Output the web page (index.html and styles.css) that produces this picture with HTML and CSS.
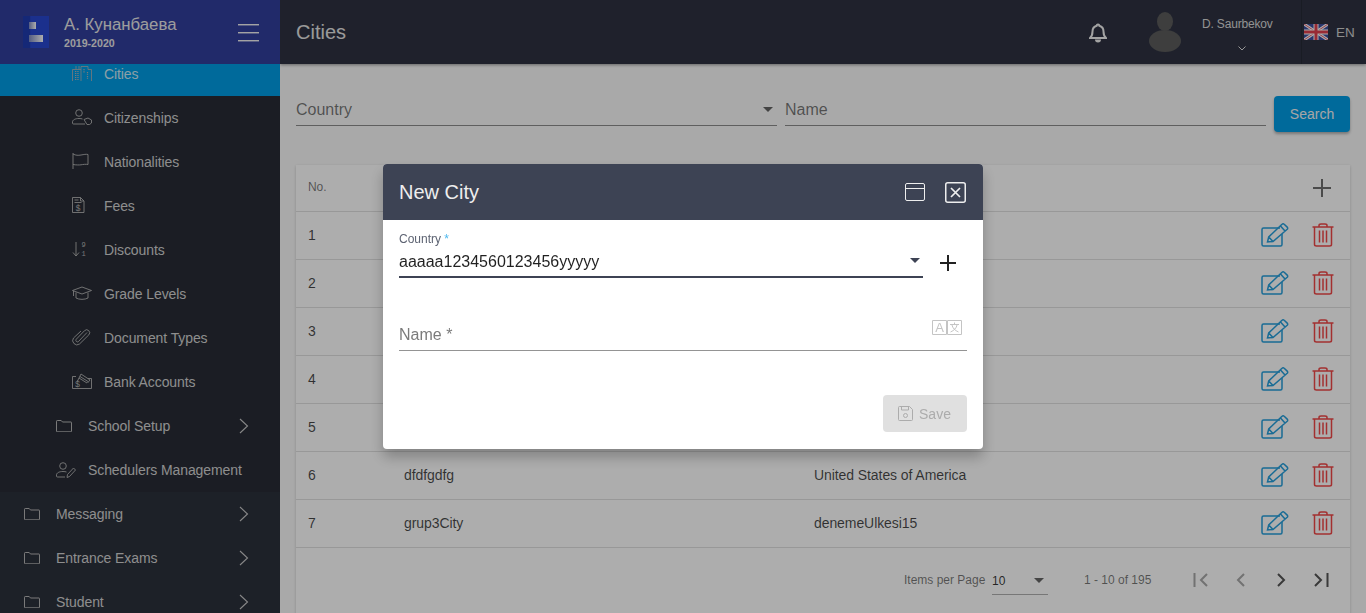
FILE: index.html
```html
<!DOCTYPE html>
<html lang="en">
<head>
<meta charset="utf-8">
<title>Cities</title>
<link rel="stylesheet" href="styles.css">
</head>
<body>
<svg class="defs" width="0" height="0" aria-hidden="true">
  <defs>
    <symbol id="i-folder" viewBox="0 0 16 12"><path d="M.5 2V1.200C.5.800.800.500 1.200.500h4L6.500 2H15c.3 0 .5.200.5.500v8.800c0 .3-.2.500-.5.500H1c-.3 0-.5-.2-.5-.5V2z" fill="none" stroke="currentColor"/></symbol>
    <symbol id="i-chev" viewBox="0 0 10 16"><path d="M1 1l7.500 7L1 15" fill="none" stroke="currentColor" stroke-width="1.100"/></symbol>
    <symbol id="i-edit" viewBox="0 0 28 24"><path d="M19 5H2.500A1.500 1.500 0 0 0 1 6.500v15A1.500 1.500 0 0 0 2.500 23h17a1.500 1.500 0 0 0 1.500-1.500V11" fill="none" stroke="currentColor" stroke-width="1.500"/><path d="M6.500 19l1.200-5L21 1.300a1.500 1.500 0 0 1 2.200 0l3 2.800a1.500 1.500 0 0 1 0 2.200L12 18.500z M7.700 14l4.300 4.500 M19.500 3l4.500 5" fill="none" stroke="currentColor" stroke-width="1.500"/></symbol>
    <symbol id="i-trash" viewBox="0 0 22 24"><path d="M.5 4h21M7 4V2.500C7 1.500 8 1 9 1h4c1 0 2 .5 2 1.500V4M2.500 4v17.500C2.500 22.500 3.500 23 4.500 23h13c1 0 2-.5 2-1.500V4M7.500 7.500v12M11 7.500v12M14.500 7.500v12" fill="none" stroke="currentColor" stroke-width="1.500"/></symbol>
  </defs>
</svg>

<div class="app">
  <aside class="sidebar">
    <div class="brand">
      <div class="logo"><span class="logo-a"></span><span class="logo-b"></span></div>
      <div class="brand-text">
        <div class="brand-name">А. Кунанбаева</div>
        <div class="brand-year">2019-2020</div>
      </div>
      <div class="burger"><span></span><span></span><span></span></div>
    </div>
    <nav class="nav">
      <div class="nested">
        <a class="item lvl3 active">
          <svg class="ico" viewBox="0 0 20 16"><path d="M.5 16V4.500H9M4 4.500V1M7 4.500V1M9 16V1.500h7v3h3.500V16" fill="none" stroke="currentColor" stroke-width=".8"/><path d="M3 6.500h4M3 8.500h4M3 10.500h4M3 12.500h4M3 14.500h4M12 4v4M15.500 7v3M15.500 11v3" stroke="currentColor" stroke-width="1.200" stroke-dasharray="1 .7" fill="none"/></svg>
          <span>Cities</span>
        </a>
        <a class="item lvl3">
          <svg class="ico" viewBox="0 0 20 16"><circle cx="7" cy="4" r="3.300" fill="none" stroke="currentColor" stroke-width=".9"/><path d="M13 15H1.500A1 1 0 0 1 .5 14v-1c0-2 2.500-3.500 6.500-3.500 1.500 0 2.500.2 3.500.5" fill="none" stroke="currentColor" stroke-width=".9"/><path d="M12 10.500l4-1.500 3.500 2v3l-2 1.500H15z" fill="none" stroke="currentColor" stroke-width=".9"/></svg>
          <span>Citizenships</span>
        </a>
        <a class="item lvl3">
          <svg class="ico" viewBox="0 0 20 16"><path d="M1 0v16M1 1c3 1.500 5 1.500 8 1s5-1 7-.5v10c-2-.5-5 0-7 .3s-5 .2-8-.3" fill="none" stroke="currentColor" stroke-width=".9"/></svg>
          <span>Nationalities</span>
        </a>
        <a class="item lvl3">
          <svg class="ico" viewBox="0 0 20 16"><path d="M.5.500h8l3.500 3.500v11.500H.5zM8.500.500V4H12M2.500 3h4M2.500 5.500h7" fill="none" stroke="currentColor" stroke-width=".9"/><text x="3.500" y="14" class="ico-text">$</text></svg>
          <span>Fees</span>
        </a>
        <a class="item lvl3">
          <svg class="ico" viewBox="0 0 20 16"><path d="M4 1v14M1 11.500L4 15l3-3.500" fill="none" stroke="currentColor" stroke-width=".9"/><text x="9.500" y="6" class="ico-digit">9</text><text x="9.500" y="14.500" class="ico-digit">1</text></svg>
          <span>Discounts</span>
        </a>
        <a class="item lvl3">
          <svg class="ico" viewBox="0 0 20 16"><path d="M.5 5.500L10 2l9.500 3.500L10 9zM4 7.500V13c3 1.800 9 1.800 12 0V7.500M1.500 6v5" fill="none" stroke="currentColor" stroke-width=".9"/></svg>
          <span>Grade Levels</span>
        </a>
        <a class="item lvl3">
          <svg class="ico" viewBox="0 0 20 16"><path d="M15 3.500L6.500 12.500a1.600 1.600 0 0 1-2.300-2.200L12.500 1.700a3 3 0 0 1 4.300 4.200L7.500 15a4.300 4.300 0 0 1-6-6L9 2" fill="none" stroke="currentColor" stroke-width=".9"/></svg>
          <span>Document Types</span>
        </a>
        <a class="item lvl3">
          <svg class="ico" viewBox="0 0 20 16"><path d="M4 3.500H.5v12h19v-10H16M5 9l4-8 9 6-2.500 3M7 5l8 5M8 3.500l8 5" fill="none" stroke="currentColor" stroke-width=".9"/><text x="3" y="14" class="ico-text">$</text></svg>
          <span>Bank Accounts</span>
        </a>
        <a class="item lvl2">
          <svg class="ico folder"><use href="#i-folder"/></svg>
          <span class="grow">School Setup</span>
          <svg class="chev"><use href="#i-chev"/></svg>
        </a>
        <a class="item lvl2">
          <svg class="ico" viewBox="0 0 20 16"><circle cx="7" cy="4" r="3.300" fill="none" stroke="currentColor" stroke-width=".9"/><path d="M9 15H1.500A1 1 0 0 1 .5 14v-1c0-2 2.500-3.500 6.500-3.500 1.500 0 2.500.2 3.500.5M11 15.500l.5-3 6-6.500 2 2-6 6.500z" fill="none" stroke="currentColor" stroke-width=".9"/></svg>
          <span>Schedulers Management</span>
        </a>
      </div>
      <a class="item lvl1"><svg class="ico folder"><use href="#i-folder"/></svg><span class="grow">Messaging</span><svg class="chev"><use href="#i-chev"/></svg></a>
      <a class="item lvl1"><svg class="ico folder"><use href="#i-folder"/></svg><span class="grow">Entrance Exams</span><svg class="chev"><use href="#i-chev"/></svg></a>
      <a class="item lvl1"><svg class="ico folder"><use href="#i-folder"/></svg><span class="grow">Student</span><svg class="chev"><use href="#i-chev"/></svg></a>
    </nav>
  </aside>

  <div class="main">
    <header class="topbar">
      <h1 class="page-title">Cities</h1>
      <svg class="bell" viewBox="0 0 18 20"><path d="M9 1.500a1.300 1.300 0 0 1 1.300 1.200C13 3.400 14.500 5.500 14.500 8.500c0 3.500.8 5 2.500 6.500H1c1.700-1.500 2.500-3 2.500-6.500 0-3 1.500-5.100 4.200-5.800A1.300 1.300 0 0 1 9 1.500z" fill="none" stroke="currentColor" stroke-width="2"/><path d="M6 16.500a3 3 0 0 0 6 0z" fill="currentColor"/></svg>
      <svg class="avatar" viewBox="0 0 32 40"><ellipse cx="16" cy="9.500" rx="8" ry="9.500" fill="currentColor"/><ellipse cx="16" cy="29" rx="16" ry="11" fill="currentColor"/></svg>
      <div class="user">
        <div class="user-name">D. Saurbekov</div>
        <svg class="user-chev" viewBox="0 0 8 5"><path d="M.5.500L4 4 7.500.500" fill="none" stroke="currentColor"/></svg>
      </div>
      <div class="lang">
        <svg class="flag" viewBox="0 0 24 16"><rect width="24" height="16" fill="#3c4ea0"/><path d="M0 0l24 16M24 0L0 16" stroke="#fff" stroke-width="3"/><path d="M0 0l24 16M24 0L0 16" stroke="#e05a6a" stroke-width="1"/><path d="M12 0v16M0 8h24" stroke="#fff" stroke-width="5"/><path d="M12 0v16M0 8h24" stroke="#e0404f" stroke-width="3"/></svg>
        <span>EN</span>
      </div>
    </header>

    <section class="content">
      <div class="filters">
        <div class="field select-field"><span class="ph">Country</span><i class="caret"></i></div>
        <div class="field"><span class="ph">Name</span></div>
        <button class="search" type="button">Search</button>
      </div>

      <div class="card">
        <div class="row head"><span class="c-no">No.</span><span class="grow"></span><svg class="plus" viewBox="0 0 20 20"><path d="M10 1v18M1 10h18" stroke="currentColor" stroke-width="2"/></svg></div>
        <div class="row"><span class="c-no">1</span><span class="c-name"></span><span class="c-country"></span><svg class="act edit"><use href="#i-edit"/></svg><svg class="act trash"><use href="#i-trash"/></svg></div>
        <div class="row"><span class="c-no">2</span><span class="c-name"></span><span class="c-country"></span><svg class="act edit"><use href="#i-edit"/></svg><svg class="act trash"><use href="#i-trash"/></svg></div>
        <div class="row"><span class="c-no">3</span><span class="c-name"></span><span class="c-country"></span><svg class="act edit"><use href="#i-edit"/></svg><svg class="act trash"><use href="#i-trash"/></svg></div>
        <div class="row"><span class="c-no">4</span><span class="c-name"></span><span class="c-country"></span><svg class="act edit"><use href="#i-edit"/></svg><svg class="act trash"><use href="#i-trash"/></svg></div>
        <div class="row"><span class="c-no">5</span><span class="c-name"></span><span class="c-country"></span><svg class="act edit"><use href="#i-edit"/></svg><svg class="act trash"><use href="#i-trash"/></svg></div>
        <div class="row"><span class="c-no">6</span><span class="c-name">dfdfgdfg</span><span class="c-country">United States of America</span><svg class="act edit"><use href="#i-edit"/></svg><svg class="act trash"><use href="#i-trash"/></svg></div>
        <div class="row"><span class="c-no">7</span><span class="c-name">grup3City</span><span class="c-country">denemeUlkesi15</span><svg class="act edit"><use href="#i-edit"/></svg><svg class="act trash"><use href="#i-trash"/></svg></div>
        <div class="pager">
          <span class="pg-label">Items per Page</span>
          <div class="pg-select"><span>10</span><i class="caret"></i></div>
          <span class="pg-range">1 - 10 of 195</span>
          <svg class="pg-btn off" viewBox="0 0 16 14"><path d="M1.500 0v14M14 1L8 7l6 6" fill="none" stroke="currentColor" stroke-width="2"/></svg>
          <svg class="pg-btn off" viewBox="0 0 16 14"><path d="M11 1L5 7l6 6" fill="none" stroke="currentColor" stroke-width="2"/></svg>
          <svg class="pg-btn" viewBox="0 0 16 14"><path d="M5 1l6 6-6 6" fill="none" stroke="currentColor" stroke-width="2"/></svg>
          <svg class="pg-btn" viewBox="0 0 16 14"><path d="M14.500 0v14M2 1l6 6-6 6" fill="none" stroke="currentColor" stroke-width="2"/></svg>
        </div>
      </div>
    </section>
  </div>
</div>

<div class="backdrop"></div>

<div class="dialog">
  <div class="dlg-head">
    <h2 class="dlg-title">New City</h2>
    <svg class="dlg-ico" viewBox="0 0 20 18"><rect x=".5" y=".5" width="19" height="17" rx="1.500" fill="none" stroke="currentColor"/><path d="M.5 5.500h19" stroke="currentColor"/></svg>
    <svg class="dlg-ico close" viewBox="0 0 21 21"><rect x=".75" y=".75" width="19.500" height="19.500" rx="2" fill="none" stroke="currentColor" stroke-width="1.500"/><path d="M6 6l9 9M15 6l-9 9" stroke="currentColor" stroke-width="1.700"/></svg>
  </div>
  <div class="dlg-body">
    <div class="dlg-row">
      <div class="dlg-select">
        <label class="dlg-label">Country <b>*</b></label>
        <div class="dlg-value"><span>aaaaa1234560123456yyyyy</span><i class="caret"></i></div>
      </div>
      <svg class="dlg-plus" viewBox="0 0 16 16"><path d="M8 0v16M0 8h16" stroke="currentColor" stroke-width="2"/></svg>
    </div>
    <div class="dlg-name">
      <span class="ph">Name *</span>
      <svg class="translate" viewBox="0 0 30 15"><path d="M.5.500h14v14H.5zM15.500.500h14v14h-14z" fill="none" stroke="currentColor"/><text x="7.500" y="12" class="tr-a">A</text><path d="M22.500 2.500v1.500M18 4.500h9M20 5c.5 3 3 5.500 6.500 7M25 5c-.5 3-3 5.500-6.500 7" fill="none" stroke="currentColor"/></svg>
    </div>
    <div class="dlg-actions">
      <button class="save" type="button">
        <svg class="save-ico" viewBox="0 0 15 15"><path d="M1.500.500h10l3 3v10a1 1 0 0 1-1 1h-12a1 1 0 0 1-1-1v-12a1 1 0 0 1 1-1zM3.500.500v3.500h7V.500" fill="none" stroke="currentColor"/><circle cx="7.500" cy="9.500" r="2" fill="none" stroke="currentColor"/></svg>
        <span>Save</span>
      </button>
    </div>
  </div>
</div>
</body>
</html>
```

FILE: styles.css
```css
* { box-sizing: border-box; }
html, body { height: 100%; }
body {
  margin: 0;
  overflow: hidden;
  font-family: "Liberation Sans", Arial, sans-serif;
  background: #fafafa;
  color: rgba(0, 0, 0, .87);
}
.defs { position: absolute; }
.grow { flex: 1; }

.app { display: flex; height: 613px; overflow: hidden; }

/* Sidebar */
.sidebar { width: 280px; flex: none; display: flex; flex-direction: column; background: #2c313c; position: relative; z-index: 2; overflow: hidden; }
.brand { height: 64px; flex: none; display: flex; align-items: center; padding-left: 23px; background: #323e9d; color: #f0f0f0; position: relative; z-index: 1; }
.logo { width: 26px; height: 32px; background: linear-gradient(90deg, #1f3bb0 0, #1f3bb0 25%, #2848d0 30%, #2848d0 100%); position: relative; flex: none; }
.logo-a { position: absolute; left: 6px; top: 6px; width: 7px; height: 7px; background: linear-gradient(90deg, #7d8ac0, #fff); }
.logo-b { position: absolute; left: 6px; top: 19px; width: 14px; height: 7px; background: linear-gradient(90deg, #7d8ac0, #fff); }
.brand-text { margin-left: 15px; flex: 1; padding-top: 1px; }
.brand-name { font-size: 16.8px; line-height: 18px; color: #e8e8e8; }
.brand-year { font-size: 10.6px; font-weight: 700; line-height: 12px; margin-top: 3px; color: #e8e8e8; }
.burger { width: 21px; margin-right: 21px; display: flex; flex-direction: column; gap: 7px; }
.burger span { height: 1px; background: #f0f0f0; box-shadow: 0 1px 0 rgba(255,255,255,.4); }

.nav { flex: 1; margin-top: -12px; }
.nested { background: #282c36; }
.item { display: flex; align-items: center; height: 44px; font-size: 14px; letter-spacing: -.09px; color: #d2d2d2; padding-right: 31px; }
.lvl1 { padding-left: 24px; }
.lvl2 { padding-left: 56px; }
.lvl3 { padding-left: 72px; }
.active { background: #009de5; color: #cfeaf5; }
.ico { width: 20px; height: 16px; flex: none; margin-right: 12px; color: #b4b4b4; overflow: visible; }
.lvl3 .ico { margin-top: -2px; }
.folder { width: 16px; height: 12px; margin-right: 16px; }
.ico-text { font-size: 8.5px; fill: currentColor; font-family: "Liberation Mono", monospace; letter-spacing: 0; }
.ico-digit { font-size: 7px; fill: currentColor; font-family: "Liberation Mono", monospace; letter-spacing: 0; }
.chev { width: 10px; height: 16px; color: #c8c8c8; flex: none; }

/* Main */
.main { flex: 1; min-width: 0; display: flex; flex-direction: column; }
.topbar { height: 64px; flex: none; display: flex; align-items: center; padding-left: 16px; background: #2e3241; color: #d8d8d8; box-shadow: 0 1px 3px rgba(0,0,0,.4); position: relative; z-index: 1; }
.page-title { flex: 1; margin: 0; font-size: 20px; font-weight: 400; color: #e4e4e4; }
.bell { width: 18px; height: 20px; color: #f0f0f0; margin: 2px 42px 0 0; }
.avatar { width: 32px; height: 40px; color: #5c5c5c; margin-right: 21px; }
.user { width: 99px; height: 64px; display: flex; flex-direction: column; align-items: flex-start; padding-top: 17px; flex: none; }
.user-name { font-size: 12px; line-height: 14px; letter-spacing: -.17px; color: #d8d8d8; white-space: nowrap; }
.user-chev { width: 8px; height: 5px; margin: 15px 0 0 36px; color: #e0e0e0; }
.lang { width: 65px; height: 64px; flex: none; display: flex; align-items: center; padding-left: 2px; border-left: 1px solid #262a36; gap: 8px; font-size: 13.5px; color: #d0d0d0; }
.flag { width: 24px; height: 16px; }

.content { flex: 1; padding: 32px 16px 0; background: #fafafa; }
.filters { display: flex; gap: 8px; align-items: flex-start; }
.field { flex: 1 1 0; min-width: 0; height: 30px; border-bottom: 1px solid #8d8d8d; display: flex; align-items: center; padding-bottom: 2px; }
.ph { font-size: 16px; color: rgba(0, 0, 0, .54); }
.select-field { justify-content: space-between; }
.select-field .caret { margin-right: 4px; }
.caret { display: block; width: 0; height: 0; border-left: 5px solid transparent; border-right: 5px solid transparent; border-top: 5px solid rgba(0, 0, 0, .6); }
.search { width: 76px; height: 36px; border: 0; border-radius: 4px; background: #009de5; color: #f4f4f4; font: 14px "Liberation Sans", Arial, sans-serif; box-shadow: 0 2px 3px rgba(0,0,0,.3); }

.card { margin-top: 33px; background: #fff; box-shadow: 0 1px 3px rgba(0,0,0,.2); }
.row { display: flex; align-items: center; height: 48px; padding: 0 16px 2px 12px; border-bottom: 1px solid #e0e0e0; font-size: 14px; letter-spacing: -.08px; color: rgba(0,0,0,.72); }
.row.head { height: 47px; font-size: 12px; color: rgba(0,0,0,.54); padding: 0 18px 2px 12px; }
.head .plus { margin-top: 2px; }
.c-no { width: 96px; flex: none; }
.c-name { width: 410px; flex: none; }
.c-country { flex: 1; }
.plus { width: 20px; height: 20px; color: #6f6f6f; }
.act { flex: none; }
.edit { width: 28px; height: 24px; color: #269fdc; margin-right: 23px; }
.trash { width: 22px; height: 24px; color: #f04848; }

.pager { display: flex; align-items: center; height: 88px; padding: 0 0 24px 608px; font-size: 12px; color: rgba(0,0,0,.54); }
.pg-label { width: 88px; flex: none; }
.pg-select { width: 56px; height: 30px; flex: none; border-bottom: 1px solid #b0b0b0; display: flex; align-items: center; justify-content: space-between; padding: 2px 4px 0 0; color: rgba(0,0,0,.8); }
.pg-range { width: 107px; margin-left: 36px; flex: none; }
.pg-btn { width: 16px; height: 14px; margin-right: 24px; color: #555; flex: none; }
.pg-btn.off { color: #a8a8a8; }
.pg-range + .pg-btn { margin-left: 2px; }

/* Overlay */
.backdrop { position: fixed; inset: 0; background: rgba(0, 0, 0, .32); z-index: 5; }
.dialog { position: fixed; left: 383px; top: 164px; width: 600px; height: 285px; background: #fff; border-radius: 4px; overflow: hidden; z-index: 6; box-shadow: 0 8px 14px rgba(0,0,0,.25); }
.dlg-head { height: 56px; background: #3d4354; display: flex; align-items: center; padding: 0 17px 0 16px; color: #eee; }
.dlg-title { flex: 1; margin: 0; font-size: 20px; font-weight: 400; }
.dlg-ico { width: 20px; height: 18px; }
.close { width: 21px; height: 21px; margin-left: 20px; }
.dlg-body { padding: 12px 16px 0; }
.dlg-row { display: flex; }
.dlg-select { width: 524px; height: 46px; border-bottom: 2px solid #3d4354; }
.dlg-label { display: block; font-size: 12px; line-height: 14px; color: #5d6372; }
.dlg-label b { color: #4db8ee; font-weight: 400; }
.dlg-value { display: flex; align-items: center; justify-content: space-between; font-size: 16px; line-height: 22px; margin-top: 5px; padding-right: 3px; }
.dlg-value .caret { margin-top: -4px; border-top-color: #3d4354; }
.dlg-plus { width: 16px; height: 16px; margin: 23px 0 0 17px; color: #222; }
.dlg-name { height: 46px; margin-top: 27px; border-bottom: 1px solid #949494; display: flex; align-items: flex-end; justify-content: space-between; padding-bottom: 6px; position: relative; }
.dlg-name .ph { color: #7b7b7b; }
.translate { width: 30px; height: 15px; position: absolute; right: 5px; top: 15px; color: #c4c4c4; }
.tr-a { font-size: 13px; fill: currentColor; text-anchor: middle; }
.dlg-actions { display: flex; justify-content: flex-end; margin-top: 44px; }
.save { width: 84px; height: 37px; border: 0; border-radius: 4px; background: #e0e0e0; color: #acacac; display: flex; align-items: center; justify-content: center; gap: 6px; font: 14px "Liberation Sans", Arial, sans-serif; padding: 0 1px 0 0; }
.save-ico { width: 15px; height: 15px; }
```
